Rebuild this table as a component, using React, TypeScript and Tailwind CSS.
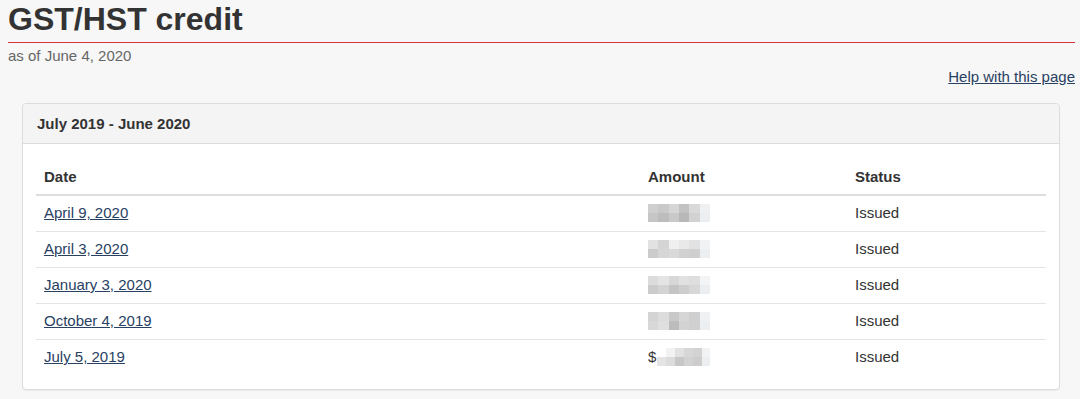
const payments = [
  { date: "April 9, 2020", dollar: false, shades: ["#cfcfcf", "#c9c9c9", "#d6d6d6", "#c2c2c2", "#d9d9d9", "#eef0f2", "#c6c6c6", "#bdbdbd", "#c9c9c9", "#b8b8b8", "#d2d2d2", "#eceff1"] },
  { date: "April 3, 2020", dollar: false, shades: ["#e2e2e2", "#d4d4d4", "#efefef", "#e9e9e9", "#e2e2e2", "#f0f2f4", "#cbcbcb", "#d6d6d6", "#d9d9d9", "#d1d1d1", "#cfcfcf", "#eceff1"] },
  { date: "January 3, 2020", dollar: false, shades: ["#dcdcdc", "#e4e4e4", "#d7d7d7", "#e1e1e1", "#dedede", "#f2f4f6", "#cbcbcb", "#d3d3d3", "#c4c4c4", "#cdcdcd", "#d7d7d7", "#eceff1"] },
  { date: "October 4, 2019", dollar: false, shades: ["#d4d4d4", "#dcdcdc", "#c9c9c9", "#d6d6d6", "#cfcfcf", "#eff1f3", "#d8d8d8", "#dfdfdf", "#bcbcbc", "#d3d3d3", "#d0d0d0", "#eceff1"] },
  { date: "July 5, 2019", dollar: true, shades: ["#ffffff", "#f2f2f2", "#e1e1e1", "#d7d7d7", "#d3d3d3", "#f0f2f4", "#e4e4e4", "#dcdcdc", "#c7c7c7", "#d2d2d2", "#cccccc", "#eceff1"] },
];

function Blurred({ shades, dollar }: { shades: string[]; dollar: boolean }) {
  return (
    <div className="flex items-center">
      {dollar && <span className="mr-[1px]">$</span>}
      <div className={`grid grid-cols-6 blur-[0.6px] ${dollar ? "w-[53px]" : "w-[62px]"}`}>
        {shades.map((c, i) => (
          <div key={i} className="h-[9px]" style={{ backgroundColor: c }} />
        ))}
      </div>
    </div>
  );
}

export default function App() {
  return (
    <div className="min-h-screen bg-[#f7f7f7] text-[#333] text-[15px] font-['Liberation_Sans',Arial,sans-serif]">
      {/* Title */}
      <h1 className="ml-2 mr-[5px] pb-[4px] border-b border-[#d3353b] text-[32px] leading-[38px] font-bold text-[#333]">
        GST/HST credit
      </h1>
      <p className="ml-2 mt-[3px] leading-[20px] text-[#666]">as of June 4, 2020</p>
      <div className="flex justify-end pr-[5px] mt-[1px] leading-[20px]">
        <a href="#" className="text-[#284162] underline">
          Help with this page
        </a>
      </div>

      {/* Panel */}
      <section className="ml-[22px] mr-[20px] mt-[16px] border border-[#dcdcdc] rounded-[4px] bg-white shadow-[0_1px_1px_rgba(0,0,0,0.05)]">
        <header className="h-[40px] flex items-center px-[14px] pt-[1px] bg-[#f4f4f4] border-b border-[#dcdcdc] rounded-t-[4px] font-bold">
          July 2019 - June 2020
        </header>
        <div className="px-[13px] pt-[15px] pb-[14px]">
          <table className="w-full border-collapse">
            <thead>
              <tr className="border-b-2 border-[#dddddd] text-left">
                <th className="w-[604px] h-[36px] px-2 pt-[1px] font-bold">Date</th>
                <th className="w-[207px] px-2 pt-[1px] font-bold">Amount</th>
                <th className="px-2 pt-[1px] font-bold">Status</th>
              </tr>
            </thead>
            <tbody>
              {payments.map((p, i) => (
                <tr key={p.date} className={i < payments.length - 1 ? "border-b border-[#e4e4e4]" : ""}>
                  <td className="h-[36px] px-2">
                    <a href="#" className="text-[#284162] underline">
                      {p.date}
                    </a>
                  </td>
                  <td className="px-2">
                    <Blurred shades={p.shades} dollar={p.dollar} />
                  </td>
                  <td className="px-2">Issued</td>
                </tr>
              ))}
            </tbody>
          </table>
        </div>
      </section>
    </div>
  );
}
